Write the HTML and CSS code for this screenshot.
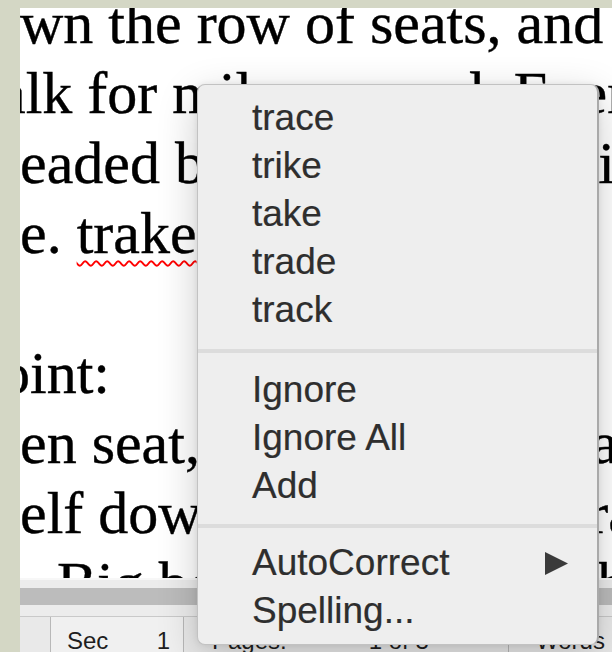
FILE: index.html
```html
<!DOCTYPE html>
<html lang="en">
<head>
<meta charset="utf-8">
<title>Document</title>
<link rel="stylesheet" href="styles.css">
</head>
<body>
<div class="app">
  <div class="doc">
    <div class="text">
      <div class="line">wn the row of seats, and</div>
      <div class="line l2">alk for miles around. Every</div>
      <div class="line">eaded by the tour guide in</div>
      <div class="line">e. <span class="miss">trake</span></div>
      <div class="line"> </div>
      <div class="line l6">oint:</div>
      <div class="line">en seat, he sat down by a</div>
      <div class="line">elf down beside a big stranger</div>
      <div class="line l9">Big boy sat still in his hat</div>
    </div>
  </div>
  <div class="hscroll"><div class="track"></div></div>
  <div class="status">
    <div class="cell c0"></div>
    <div class="cell c1"><span>Sec</span><span>1</span></div>
    <div class="cell c2"><span>Pages:</span><span>1 of 3</span></div>
    <div class="cell c3"><span>Words</span></div>
  </div>
</div>

<div class="menu">
  <div class="item">trace</div>
  <div class="item">trike</div>
  <div class="item">take</div>
  <div class="item">trade</div>
  <div class="item">track</div>
  <div class="sep"></div>
  <div class="item">Ignore</div>
  <div class="item">Ignore All</div>
  <div class="item">Add</div>
  <div class="sep sep-low"></div>
  <div class="item sub">
    <span>AutoCorrect</span>
    <svg class="arrow" width="23" height="23" viewBox="0 0 23 23"><polygon points="0,0 23,11.5 0,23"/></svg>
  </div>
  <div class="item">Spelling...</div>
</div>
</body>
</html>
```
FILE: styles.css
```css
html, body {
  margin: 0;
}

body {
  width: 612px;
  height: 652px;
  overflow: hidden;
  position: relative;
  box-sizing: border-box;
  padding: 8px 0 0 20px;
  background: #d4d7c5;
}

/* word processor window */
.app {
  height: 644px;
  display: flex;
  flex-direction: column;
}

.doc {
  height: 570px;
  flex: none;
  background: #ffffff;
  overflow: hidden;
}

.text {
  margin-top: -20px;
  font-family: "Liberation Serif", "Times New Roman", serif;
  font-size: 60px;
  line-height: 70px;
  color: #000;
  -webkit-text-stroke: 0.4px #000;
}

.line {
  height: 70px;
  white-space: pre;
}

.l2 { margin-left: -21px; }
.l6 { margin-left: -20px; }
.l9 { margin-left: 37px; }

.miss {
  text-decoration: underline wavy #ff0000;
  text-decoration-thickness: 2px;
  text-underline-offset: 7px;
  text-decoration-skip-ink: none;
}

/* horizontal scroller */
.hscroll {
  height: 39px;
  flex: none;
  box-sizing: border-box;
  padding-top: 10px;
  background: #ececec;
  border-top: 2px solid #f7f7f7;
  border-bottom: 1px solid #c9c9c9;
}

.track {
  height: 17px;
  margin-top: -2px;
  background: #bcbcbc;
}

/* status bar */
.status {
  flex: 1;
  display: flex;
  background: #e9e9e9;
  font-family: "Liberation Sans", Arial, sans-serif;
  font-size: 24px;
  line-height: 35px;
  color: #1e1e1e;
}

.cell {
  box-sizing: border-box;
  padding-top: 6px;
  display: flex;
}

.c0 {
  width: 31px;
  border-right: 1px solid #b8b8b8;
}

.c1 {
  width: 133px;
  padding-left: 16px;
  padding-right: 13px;
  justify-content: space-between;
  background: #f0f0f0;
  border-right: 1px solid #b8b8b8;
}

.c2 {
  width: 325px;
  padding-left: 28px;
  gap: 82px;
  border-right: 1px solid #b8b8b8;
}

.c3 {
  flex: 1;
  padding-left: 27px;
}

/* spelling context menu */
.menu {
  position: absolute;
  left: 197px;
  top: 84px;
  width: 402px;
  box-sizing: border-box;
  padding: 9px 0 9px;
  background: #eeeeee;
  border: 1px solid #c2c2c2;
  border-right: 2px solid #a9a9a9;
  border-radius: 8px;
  box-shadow: 0 12px 40px rgba(0, 0, 0, 0.2), 0 0 6px rgba(0, 0, 0, 0.08);
  font-family: "Liberation Sans", Arial, sans-serif;
  font-size: 37px;
  line-height: 48px;
  color: #2e2e2e;
  -webkit-text-stroke: 0.2px #2e2e2e;
}

.item {
  height: 48px;
  padding-left: 54px;
  white-space: nowrap;
}

.item.sub {
  display: flex;
  justify-content: space-between;
  align-items: center;
  padding-right: 29px;
}

.arrow {
  fill: #3a3a3a;
}

.sep {
  height: 4px;
  margin: 15px 0 13px;
  background: #dcdcdc;
}

.sep-low {
  margin: 14px 0 11px;
}
```
